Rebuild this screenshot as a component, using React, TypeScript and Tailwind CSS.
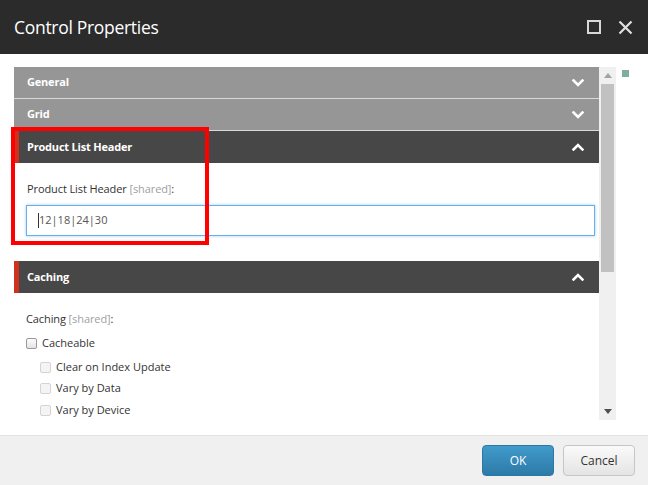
import React from "react";

const Chevron = ({ up }: { up?: boolean }) => (
  <svg width="12" height="8" viewBox="0 0 12 8" className="block">
    <polyline
      points={up ? "1.5,6.5 6,2 10.5,6.5" : "1.5,1.5 6,6 10.5,1.5"}
      fill="none"
      stroke="#ffffff"
      strokeWidth="2.6"
      strokeLinecap="square"
    />
  </svg>
);

const Header = ({
  title,
  dark,
  up,
  accent,
  border,
}: {
  title: string;
  dark?: boolean;
  up?: boolean;
  accent?: boolean;
  border?: boolean;
}) => (
  <div
    className={`flex items-center justify-between h-[32px] pr-[15px] ${
      dark ? "bg-[#474747]" : "bg-[#969696]"
    } ${border ? "border-b border-[#d9d9d9]" : ""} ${
      accent ? "border-l-[5px] border-l-[#d0311d] pl-[8px]" : "pl-[13px]"
    }`}
  >
    <span className="text-[11px] font-bold text-white tracking-[-0.2px]">{title}</span>
    <Chevron up={up} />
  </div>
);

const Box = ({ disabled }: { disabled?: boolean }) => (
  <span
    className={`inline-block w-[11px] h-[11px] rounded-[2px] border ${
      disabled
        ? "border-[#d4d4d4] bg-[#f4f4f4]"
        : "border-[#9a9a9a] bg-gradient-to-b from-[#fdfdfd] to-[#e4e4e4]"
    }`}
  />
);

export default function App() {
  return (
    <div
      className="w-[648px] h-[485px] flex flex-col overflow-hidden"
      style={{ fontFamily: '"Open Sans", "Noto Sans", sans-serif' }}
    >
      <div className="h-[54px] bg-[#2b2b2b] flex items-center justify-between pl-[14px] pr-[15px] shrink-0">
        <span className="text-[17.5px] text-white tracking-[-0.3px]">Control Properties</span>
        <div className="flex items-center gap-[17px]">
          <span className="block w-[14px] h-[14px] border-2 border-[#d8d8d8]" />
          <svg width="15" height="15" viewBox="0 0 15 15">
            <path d="M1.5 1.5 L13.5 13.5 M13.5 1.5 L1.5 13.5" stroke="#e0e0e0" strokeWidth="2.2" />
          </svg>
        </div>
      </div>

      <div className="flex-1 bg-white relative pt-[13px] pl-[14px] flex">
        <div className="w-[585px] h-[353px] overflow-hidden relative">
          <Header title="General" border />
          <Header title="Grid" border />
          <Header title="Product List Header" dark up accent />
          <div className="pl-[13px] pr-[4px] pt-[17px]">
            <div className="text-[11px] text-[#333] leading-[17px] tracking-[-0.1px]">
              Product List Header <span className="text-[#a0a0a0]">[shared]</span>:
            </div>
            <div className="mt-[8px] -ml-[1px] h-[31px] border border-[#6aaee8] shadow-[0_0_3px_rgba(102,175,233,0.6)] flex items-center pl-[11px]">
              <span className="w-px h-[15px] bg-[#333]" />
              <span className="text-[11px] text-[#555]">12|18|24|30</span>
            </div>
          </div>
          <div className="mt-[25px]">
            <Header title="Caching" dark up accent />
          </div>
          <div className="pl-[12px] pt-[17px]">
            <div className="text-[11px] text-[#333] leading-[17px] tracking-[-0.1px]">
              Caching <span className="text-[#a0a0a0]">[shared]</span>:
            </div>
            <div className="mt-[8px] flex items-center gap-[5px] h-[17px] text-[11px] text-[#333]">
              <Box />
              <span>Cacheable</span>
            </div>
            <div className="pl-[14px] mt-[6px] flex flex-col gap-[3.5px] text-[11px] text-[#333]">
              <div className="flex items-center gap-[5px] h-[18px]">
                <Box disabled />
                <span>Clear on Index Update</span>
              </div>
              <div className="flex items-center gap-[5px] h-[18px]">
                <Box disabled />
                <span>Vary by Data</span>
              </div>
              <div className="flex items-center gap-[5px] h-[18px]">
                <Box disabled />
                <span>Vary by Device</span>
              </div>
            </div>
          </div>
        </div>
        <div className="w-[17px] h-[353px] bg-[#f0f0f0] flex flex-col items-center">
          <div className="h-[17px] w-full flex items-center justify-center">
            <svg width="8" height="5" viewBox="0 0 8 5">
              <polygon points="0,5 4,0 8,5" fill="#a3a3a3" />
            </svg>
          </div>
          <div className="w-[13px] h-[188px] bg-[#c1c1c1]" />
          <div className="flex-1" />
          <div className="h-[17px] w-full flex items-center justify-center">
            <svg width="8" height="5" viewBox="0 0 8 5">
              <polygon points="0,0 8,0 4,5" fill="#505050" />
            </svg>
          </div>
        </div>
        <span className="absolute left-[622px] top-[16px] w-[7px] h-[7px] bg-[#7fae9a]" />
        <span className="absolute left-[11px] top-[73px] w-[198px] h-[118px] border-[4px] border-[#ff0000] pointer-events-none" />
      </div>

      <div className="h-[50px] shrink-0 bg-[#f0f0f0] border-t border-[#e2e2e2] flex items-center justify-end gap-[9px] pr-[13px]">
        <button className="w-[72px] h-[31px] rounded-[4px] bg-gradient-to-b from-[#409bcb] to-[#2d7aa8] border border-[#2b78a5] text-white text-[12px]">
          OK
        </button>
        <button className="w-[72px] h-[31px] rounded-[4px] bg-gradient-to-b from-[#fafafa] to-[#e4e4e4] border border-[#c6c6c6] text-[#333] text-[12px]">
          Cancel
        </button>
      </div>
    </div>
  );
}
